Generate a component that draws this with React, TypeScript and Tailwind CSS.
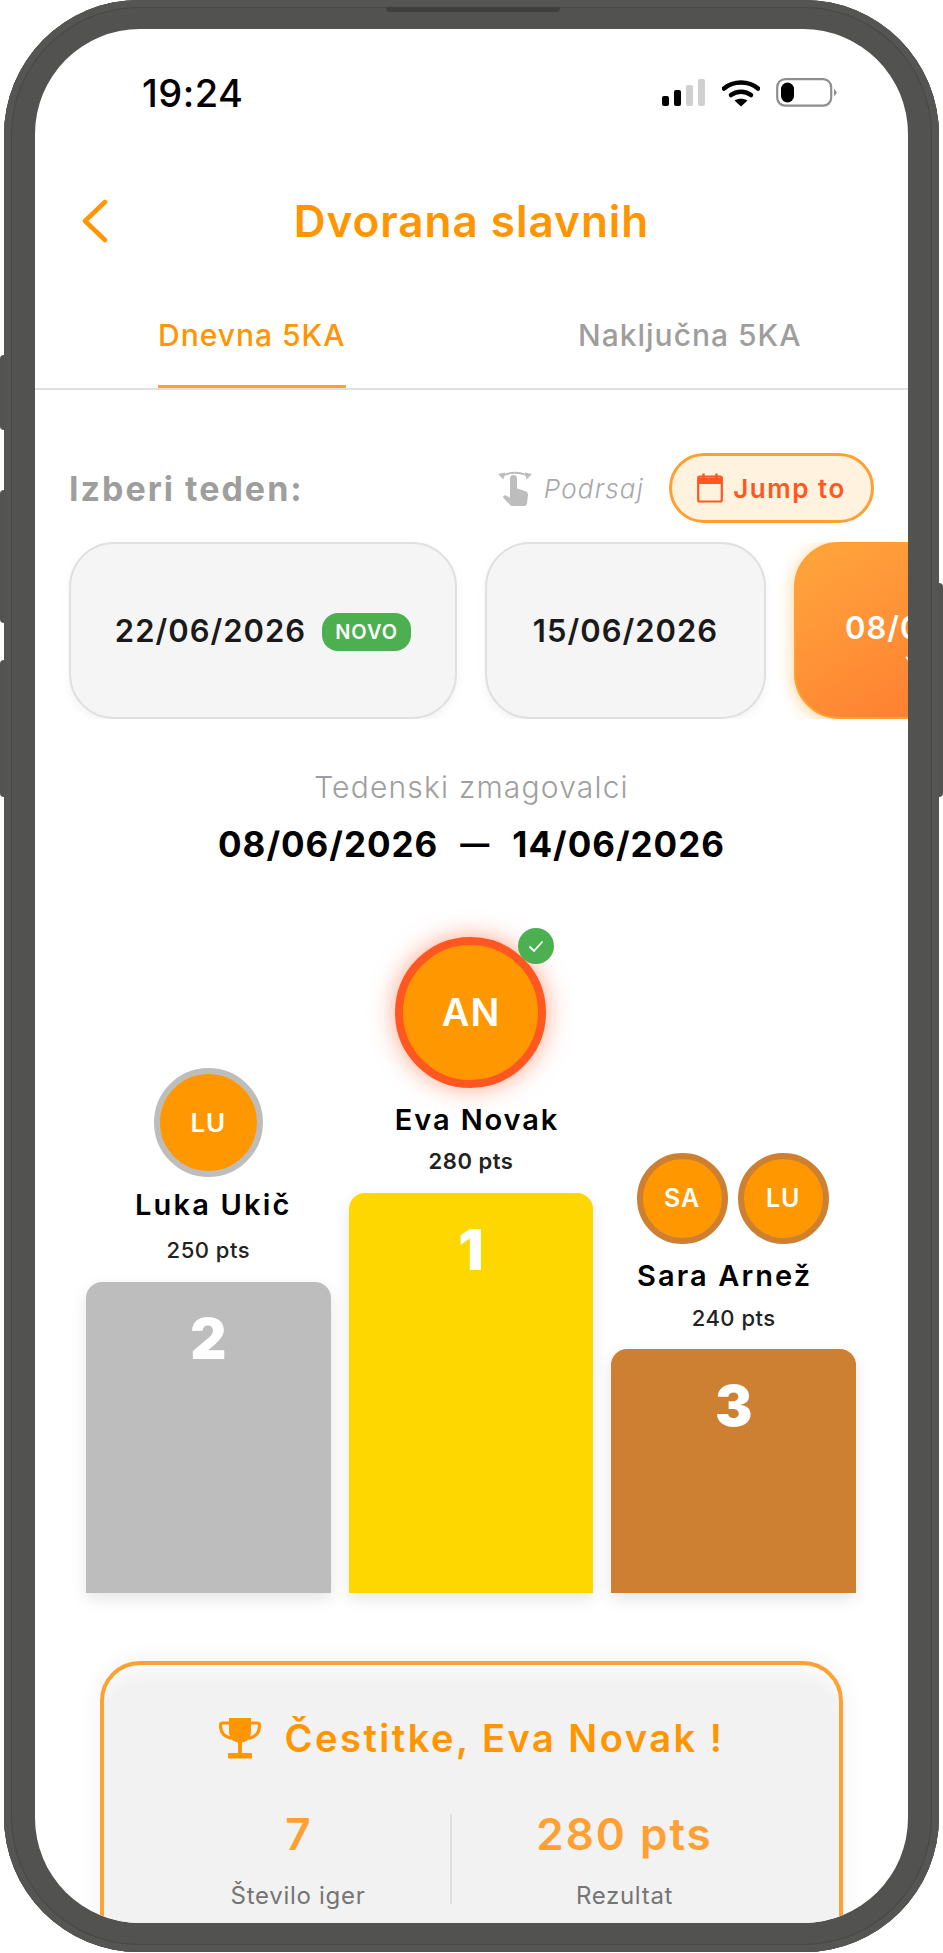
const ORANGE = '#FF9500';

function SignalIcon() {
  return (
    <svg width="44" height="28" viewBox="0 0 44 28">
      <rect x="0" y="17" width="7" height="10" rx="2" fill="#000" />
      <rect x="12" y="11" width="7" height="16" rx="2" fill="#000" />
      <rect x="24" y="6" width="7" height="21" rx="2" fill="#d0d0d0" />
      <rect x="36" y="0" width="7" height="27" rx="2" fill="#d0d0d0" />
    </svg>
  );
}

function WifiIcon() {
  return (
    <svg width="38" height="28" viewBox="0 0 38 28" fill="none">
      <path d="M2 9.5C11.5 1.5 26.5 1.5 36 9.5" stroke="#000" strokeWidth="4.5" strokeLinecap="round" />
      <path d="M9 16C14.5 11.5 23.5 11.5 29 16" stroke="#000" strokeWidth="4.5" strokeLinecap="round" />
      <path d="M12.5 21.5C16 19 22 19 25.5 21.5L19 27.5Z" fill="#000" />
    </svg>
  );
}

function BatteryIcon() {
  return (
    <svg width="62" height="30" viewBox="0 0 62 30" fill="none">
      <rect x="1.2" y="1.2" width="54" height="26.5" rx="8" stroke="#8e8e8e" strokeWidth="2.2" />
      <rect x="5" y="4.5" width="13" height="20" rx="6.5" fill="#000" />
      <path d="M58 10.5L61 14.5L58 18.5Z" fill="#8e8e8e" />
    </svg>
  );
}

function SwipeHint() {
  return (
    <svg width="34" height="38" viewBox="0 0 34 38" fill="#bdbdbd">
      <path d="M3 7.5C11 2.5 23 2.5 31 7.5" fill="none" stroke="#bdbdbd" strokeWidth="2" />
      <path d="M0 5L7 3.5L5.5 10.5Z" />
      <path d="M34 5L27 3.5L28.5 10.5Z" />
      <path d="M12 9.500a3.500 3.500 0 0 1 7 0v10l8 2.500c2 .6 3 2 3 4l-1 8.500c-.2 1.500-1.200 2.500-2.800 2.500H14.500c-1 0-1.800-.4-2.500-1.200L5.500 29c-1-1.400.8-3.400 2.500-2.400l4 2.200Z" />
    </svg>
  );
}

function CalendarIcon() {
  return (
    <svg width="26" height="30" viewBox="0 0 26 30" fill="none" stroke="#FF5722">
      <rect x="1.2" y="3.5" width="23.6" height="25" rx="1.5" strokeWidth="2.2" />
      <path d="M1.2 5h23.6v5.5H1.2Z" fill="#FF5722" strokeWidth="1" />
      <path d="M6.5 0.5v5M19.5 0.5v5" strokeWidth="2.4" />
    </svg>
  );
}

function TrophyIcon() {
  return (
    <svg width="42" height="42" viewBox="0 0 42 42" fill="#FF9500">
      <path d="M10 1h22v13c0 7-4 11.5-11 11.5S10 21 10 14Z" />
      <path d="M10 6H3.5c-1.5 0-2 1-2 2.500C1.500 15 5 20 12.500 21.500M32 6h6.500c1.500 0 2 1 2 2.500C40.500 15 37 20 29.500 21.500" fill="none" stroke="#FF9500" strokeWidth="3.2" />
      <rect x="19" y="24" width="4" height="12" />
      <rect x="9" y="36" width="24" height="5.500" rx="1" />
    </svg>
  );
}

function Avatar({ initials, size, ring, text }: { initials: string; size: string; ring: string; text: string }) {
  return (
    <div className={`flex items-center justify-center rounded-full bg-[#FF9800] font-semibold tracking-[1px] text-white ${size} ${ring} ${text}`}>
      {initials}
    </div>
  );
}

function PodiumBar({ place, height, color }: { place: number; height: string; color: string }) {
  return (
    <div className={`w-full rounded-t-[16px] pt-[27px] text-center text-[56px] leading-[60px] font-black text-white shadow-[0_6px_16px_rgba(0,0,0,0.1)] ${height} ${color}`}>
      {place}
    </div>
  );
}

export default function App() {
  return (
    <div className="relative h-[1953px] w-[943px] overflow-hidden bg-white font-['Inter',sans-serif]">
      {/* side buttons */}
      <div className="absolute left-0 top-[355px] h-[75px] w-[6px] rounded-l bg-[#525250]" />
      <div className="absolute left-0 top-[490px] h-[133px] w-[6px] rounded-l bg-[#525250]" />
      <div className="absolute left-0 top-[660px] h-[137px] w-[6px] rounded-l bg-[#525250]" />
      <div className="absolute right-0 top-[583px] h-[214px] w-[6px] rounded-r bg-[#525250]" />

      <div className="absolute left-[4px] top-0 h-[1952px] w-[935px] rounded-[135px] bg-[#525250] px-[31px] pb-[29px] pt-[29px] shadow-[inset_0_0_0_7px_#555553,inset_0_0_0_8px_#474745]">
        <div className="absolute left-[382px] top-[7px] h-[5px] w-[174px] rounded-b bg-[#3f3f3d]" />

        <div className="h-full w-full overflow-hidden rounded-[105px] bg-white">
          {/* status bar */}
          <div className="mt-[44px] flex h-[40px] items-center justify-between pl-[107px] pr-[70px]">
            <span className="text-[38px] font-medium leading-none tracking-[0.5px] text-black">19:24</span>
            <div className="flex items-center gap-[16px]">
              <SignalIcon />
              <WifiIcon />
              <BatteryIcon />
            </div>
          </div>

          {/* header */}
          <div className="mt-[78px] grid h-[60px] grid-cols-[1fr_auto_1fr] items-center px-[47px]">
            <svg width="26" height="44" viewBox="0 0 26 44" fill="none">
              <path d="M23 3L3 22L23 41" stroke={ORANGE} strokeWidth="4.5" strokeLinecap="round" strokeLinejoin="round" />
            </svg>
            <h1 className="text-[44px] font-semibold leading-none tracking-[1px] text-[#FF9500]">Dvorana slavnih</h1>
            <div />
          </div>

          {/* tabs */}
          <div className="mt-[66px] grid grid-cols-2 border-b-2 border-[#e0e0e0] text-center text-[30px] leading-[36px] tracking-[1px]">
            <div className="pr-[3px]">
              <span className="inline-block border-b-[3px] border-[#FFA033] pb-[32px] font-medium text-[#FF9500]">Dnevna 5KA</span>
            </div>
            <div className="font-medium text-[#9e9e9e]">Naključna 5KA</div>
          </div>

          {/* week picker */}
          <div className="mt-[63px] flex h-[70px] items-center justify-between px-[34px]">
            <span className="text-[34px] font-bold tracking-[2px] text-[#9e9e9e]">Izberi teden:</span>
            <div className="flex items-center gap-[25px]">
              <div className="flex items-center gap-[12px]">
                <SwipeHint />
                <span className="text-[26px] font-light italic tracking-[1.2px] text-[#a8a8a8]">Podrsaj</span>
              </div>
              <button className="flex h-[70px] w-[205px] items-center justify-center gap-[10px] rounded-full border-[3px] border-[#FFA033] bg-[#FFF3E0] text-[26px] font-semibold tracking-[1.5px] text-[#FF5722]">
                <CalendarIcon />
                Jump to
              </button>
            </div>
          </div>

          <div className="mt-[19px] flex h-[177px] gap-[28px] overflow-hidden pl-[34px]">
            <div className="flex h-full w-[388px] shrink-0 items-center justify-center gap-[16px] rounded-[45px] border-2 border-[#e0e0e0] bg-[#f5f5f5] pt-[2px] shadow-[0_4px_10px_rgba(0,0,0,0.05)]">
              <span className="text-[31px] font-semibold tracking-[1px] text-[#1a1a1a]">22/06/2026</span>
              <span className="flex h-[38px] w-[89px] items-center justify-center rounded-[16px] bg-[#4CAF50] text-[20px] font-semibold tracking-[1px] text-white">NOVO</span>
            </div>
            <div className="flex h-full w-[281px] shrink-0 items-center justify-center rounded-[45px] border-2 border-[#e0e0e0] bg-[#f5f5f5] pt-[2px] shadow-[0_4px_10px_rgba(0,0,0,0.05)]">
              <span className="text-[31px] font-semibold tracking-[1px] text-[#1a1a1a]">15/06/2026</span>
            </div>
            <div className="flex h-full w-[282px] shrink-0 flex-col justify-center rounded-[45px] border-2 border-[#FFA033] bg-gradient-to-br from-[#FFA63D] to-[#FF6F2C] pl-[49px] pt-[10px] shadow-[0_2px_16px_rgba(255,149,0,0.45)]">
              <span className="text-[31px] font-semibold leading-[38px] tracking-[1px] text-white">08/06/2026</span>
              <svg className="ml-[60px] mt-[4px]" width="16" height="12" viewBox="0 0 16 12" fill="none">
                <path d="M1 6L6 11L15 1" stroke="#fff" strokeWidth="2" />
              </svg>
            </div>
          </div>

          {/* selected week */}
          <p className="mt-[48px] text-center text-[30px] font-light leading-[40px] tracking-[1.2px] text-[#9e9e9e]">Tedenski zmagovalci</p>
          <div className="mt-[15px] flex h-[44px] items-center justify-center gap-[22px] text-[35px] font-bold tracking-[1px] text-black">
            <span>08/06/2026</span>
            <span className="text-[29px]">—</span>
            <span>14/06/2026</span>
          </div>

          {/* podium */}
          <div className="mt-[71px] grid grid-cols-3 items-end gap-[18px] pl-[51px] pr-[52px]">
            <div className="flex flex-col items-center">
              <Avatar initials="LU" size="h-[109px] w-[109px]" ring="border-[6px] border-[#BDBDBD]" text="text-[26px]" />
              <p className="mt-[10px] pl-[10px] text-[29px] font-semibold leading-[36px] tracking-[2.2px] text-black">Luka Ukič</p>
              <p className="mt-[12px] text-[22px] font-medium leading-[30px] tracking-[0.5px] text-[#222]">250 pts</p>
              <div className="mt-[17px] w-full">
                <PodiumBar place={2} height="h-[311px]" color="bg-[#BDBDBD]" />
              </div>
            </div>

            <div className="flex flex-col items-center">
              <div className="relative">
                <Avatar initials="AN" size="h-[151px] w-[151px]" ring="border-[8px] border-[#FF5722] shadow-[0_0_24px_rgba(255,87,34,0.55)]" text="text-[38px]" />
                <div className="absolute left-[123px] top-[-9px] flex h-[36px] w-[36px] items-center justify-center rounded-full bg-[#4CAF50]">
                  <svg width="20" height="20" viewBox="0 0 20 20" fill="none">
                    <path d="M3.5 10.500L8 15L16.500 5.500" stroke="#fff" strokeWidth="1.800" />
                  </svg>
                </div>
              </div>
              <p className="mt-[14px] pl-[12px] text-[29px] font-semibold leading-[36px] tracking-[1.9px] text-black">Eva Novak</p>
              <p className="mt-[8px] text-[22px] font-semibold leading-[30px] tracking-[0.5px] text-[#222]">280 pts</p>
              <div className="mt-[17px] w-full">
                <PodiumBar place={1} height="h-[400px]" color="bg-[#FFD700]" />
              </div>
            </div>

            <div className="flex flex-col items-center">
              <div className="flex gap-[10px] pr-[2px]">
                <Avatar initials="SA" size="h-[91px] w-[91px]" ring="border-[6px] border-[#CD7F32]" text="text-[25px]" />
                <Avatar initials="LU" size="h-[91px] w-[91px]" ring="border-[6px] border-[#CD7F32]" text="text-[25px]" />
              </div>
              <p className="mt-[14px] pr-[18px] text-[29px] font-semibold leading-[36px] tracking-[2.1px] text-black">Sara Arnež</p>
              <p className="mt-[9px] text-[22px] font-medium leading-[30px] tracking-[0.5px] text-[#222]">240 pts</p>
              <div className="mt-[16px] w-full">
                <PodiumBar place={3} height="h-[244px]" color="bg-[#CD7F32]" />
              </div>
            </div>
          </div>

          {/* congrats card */}
          <div className="ml-[65px] mr-[65px] mt-[68px] h-[400px] rounded-[40px] border-[4px] border-[#FFA033] bg-[#f2f2f2] px-[42px] pt-[50px] shadow-[0_0_24px_rgba(0,0,0,0.06),inset_0_14px_18px_-8px_rgba(255,255,255,0.9)]">
            <div className="flex h-[46px] items-center justify-center gap-[24px]">
              <TrophyIcon />
              <span className="text-[38px] font-semibold tracking-[2.5px] text-[#FF9500]">Čestitke, Eva Novak !</span>
            </div>
            <div className="mt-[45px] flex">
              <div className="w-[304px] text-center">
                <p className="text-[44px] font-semibold leading-[56px] text-[#FFA033]">7</p>
                <p className="mt-[18px] text-[24px] leading-[32px] tracking-[0.7px] text-[#757575]">Število iger</p>
              </div>
              <div className="h-[90px] w-[2px] self-center bg-[#dedede]" />
              <div className="flex-1 text-center">
                <p className="text-[44px] font-semibold leading-[56px] tracking-[2px] text-[#FFA033]">280 pts</p>
                <p className="mt-[18px] text-[24px] leading-[32px] tracking-[0.7px] text-[#757575]">Rezultat</p>
              </div>
            </div>
          </div>
        </div>
      </div>
    </div>
  );
}
